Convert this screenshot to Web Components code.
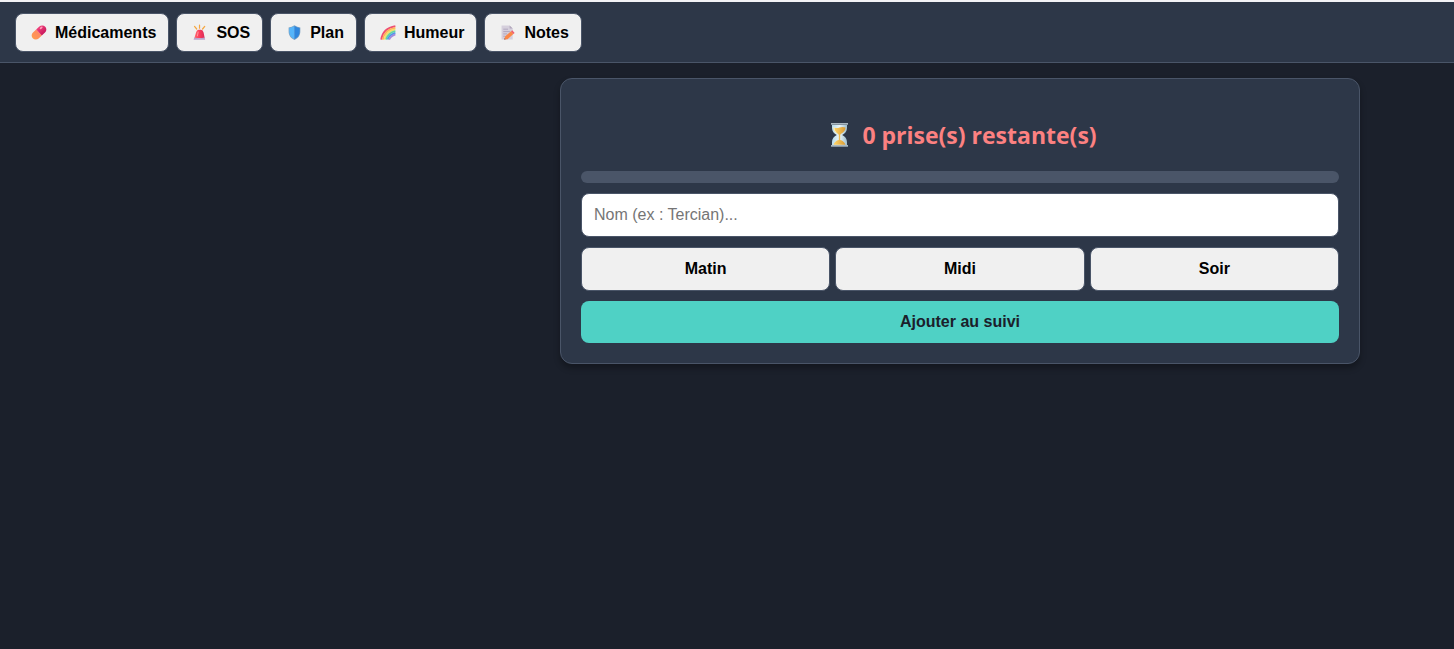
<!DOCTYPE html>
<html lang="fr">
<head>
<meta charset="UTF-8">
<meta name="viewport" content="width=device-width, initial-scale=1.0">
<title>Suivi</title>
<style>
  :root {
    --bg: #1b202b;
    --card: #2d3748;
    --line: #4a5568;
    --accent: #4fd1c5;
    --alert: #fc8181;
    --button: #f0f0f0;
  }
  body {
    margin: 0;
    min-height: 100vh;
    background: var(--bg);
    font-family: "Segoe UI", "Open Sans", "Noto Sans", sans-serif;
  }
  main {
    display: flex;
    justify-content: flex-end;
    padding: 15px 94px;
  }
</style>
</head>
<body>
  <app-nav>
    <nav-button icon="pill">Médicaments</nav-button>
    <nav-button icon="siren">SOS</nav-button>
    <nav-button icon="shield">Plan</nav-button>
    <nav-button icon="rainbow">Humeur</nav-button>
    <nav-button icon="memo">Notes</nav-button>
  </app-nav>
  <main>
    <med-card remaining="0"></med-card>
  </main>

<script>
const ICONS = {
  pill: `
    <defs>
      <linearGradient id="a" x1="0" y1="0" x2="1" y2="0"><stop stop-color="#ff9a4d"/><stop offset="1" stop-color="#ff8a63"/></linearGradient>
      <linearGradient id="b" x1="0" y1="0" x2="0" y2="1"><stop stop-color="#f0417c"/><stop offset="1" stop-color="#c9185c"/></linearGradient>
    </defs>
    <g transform="rotate(-43 11 9)">
      <path d="M11 4.600H6.400a4.400 4.400 0 0 0 0 8.800H11z" fill="url(#a)"/>
      <path d="M11 4.600h4.600a4.400 4.400 0 0 1 0 8.800H11z" fill="url(#b)"/>
      <ellipse cx="16" cy="7" rx="1.800" ry="1" fill="#ff9dbb"/>
    </g>`,
  siren: `
    <defs><linearGradient id="a"><stop stop-color="#ff6a70"/><stop offset=".5" stop-color="#fb3c5c"/><stop offset="1" stop-color="#d92b59"/></linearGradient></defs>
    <path d="M10.500 1.200v3.300M5.200 2.500l2.300 2.800M16 2.500l-2.300 2.800" stroke="#f5a63f" stroke-width="1.300" stroke-linecap="round"/>
    <path d="M6.800 9Q7.500 6.200 9.500 6.200h2.500q2.200 0 2.800 2.800l1.200 6H5z" fill="url(#a)"/>
    <path d="M9 8.500l-.7 4" stroke="#ff9a9e" stroke-width="1" stroke-linecap="round"/>
    <path d="M5 14.200q5.500 1.600 10.800 0l.7 2.600H4.200z" fill="#b9a4cd"/>`,
  shield: `
    <path d="M11.500 1.300Q8.500 3.300 5.300 3.600V8c0 4.300 2.500 7.300 6.200 8.900 3.700-1.600 6.200-4.600 6.200-8.900V3.600Q14.500 3.300 11.500 1.300z" fill="#7fa3c2"/>
    <path d="M11.500 2.200Q9 3.800 6 4.200V8c0 3.900 2 6.600 5.500 8.100z" fill="#55b5fa"/>
    <path d="M11.500 2.200Q14 3.800 17 4.200V8c0 3.900-2 6.600-5.500 8.100z" fill="#2f86dd"/>`,
  rainbow: `
    <g fill="none" stroke-width="1.900">
      <path d="M3.800 16.500C5 8.500 10.500 3.500 18.800 2.200" stroke="#ee4f72"/>
      <path d="M5.500 16.500C6.700 9.700 11.500 5.200 18.800 4" stroke="#ffad58"/>
      <path d="M7.200 16.500C8.400 11 12.500 7 18.800 5.800" stroke="#f4df69"/>
      <path d="M8.900 16.500C10 12.300 13.500 8.800 18.800 7.600" stroke="#62d5a3"/>
      <path d="M10.600 16.500C11.600 13.500 14.500 10.600 18.800 9.400" stroke="#499be9"/>
      <path d="M12.200 16.500C13 14.500 15.500 12.200 18.800 11" stroke="#a389db"/>
    </g>`,
  memo: `
    <path d="M4.200 1.500h8.500l3.300 3.300v11.700H4.200z" fill="#d5cfdc"/>
    <path d="M12.700 1.500v3.300H16z" fill="#b3a8bd"/>
    <path d="M6 5.500h5M6 8h7M6 10.500h4M6 13h2" stroke="#b0a6bd" stroke-width="1"/>
    <path d="M7 16.500l1-3.400 6.200-5.400 2.500 3-6.200 5.400z" fill="#fb8748"/>
    <path d="M14.200 7.700l1.300-1.100 2.500 3-1.300 1.100z" fill="#f05a6a"/>
    <path d="M7 16.500l.4-1.400 1.100 1.100z" fill="#5b3f48"/>`,
  hourglass: `
    <defs>
      <linearGradient id="g"><stop stop-color="#b9dbea"/><stop offset=".5" stop-color="#e9f5f8"/><stop offset="1" stop-color="#9ebdcd"/></linearGradient>
      <linearGradient id="s"><stop stop-color="#ffd66b"/><stop offset="1" stop-color="#d99a33"/></linearGradient>
    </defs>
    <path d="M9 2.500h15V6c0 3.500-2 5.300-4.800 7 2.800 1.700 4.800 3.500 4.800 7v3.500H9V20c0-3.500 2-5.300 4.800-7C11 11.300 9 9.500 9 6z" fill="url(#g)"/>
    <path d="M10.500 5.500q3 1.200 6 0t6 0c0 3.200-2 4.800-4.700 6.500l-.6 1v5c2.600.5 4.400 2.300 5.300 4.700h-12c.9-2.400 2.700-4.200 5.300-4.700v-5l-.6-1c-2.700-1.700-4.700-3.300-4.700-6.500z" fill="url(#s)"/>
    <path d="M11 5c0 3 1 5 2.700 6.200" fill="none" stroke="#fff2c2" stroke-width="1"/>
    <path d="M8 1h17v2H8zM8 23h17v2H8z" fill="#84939f"/>
    <path d="M8 1h17v.8H8zM8 23h17v.8H8z" fill="#b5c2ca"/>`
};

class AppNav extends HTMLElement {
  connectedCallback() {
    this.attachShadow({ mode: 'open' });
    this.shadowRoot.innerHTML = `
      <style>
        :host {
          display: block;
        }
        nav {
          display: flex;
          flex-wrap: wrap;
          gap: 7px;
          padding: 11px 15px 10px;
          background: var(--card);
          border-top: 2px solid #f3f3f6;
          border-bottom: 1px solid var(--line);
        }
      </style>
      <nav><slot></slot></nav>
    `;
  }
}

class NavButton extends HTMLElement {
  connectedCallback() {
    this.attachShadow({ mode: 'open' });
    this.shadowRoot.innerHTML = `
      <style>
        :host {
          display: block;
        }
        button {
          display: flex;
          align-items: center;
          gap: 5px;
          padding: 10px 12px;
          border: 1px solid var(--line);
          border-radius: 8px;
          background: var(--button);
          color: #000;
          font: bold 16px/17px Arial, "Liberation Sans", sans-serif;
          cursor: pointer;
        }
        svg {
          width: 22px;
          height: 17px;
        }
      </style>
      <button type="button">
        <svg viewBox="0 0 22 18" fill="none" aria-hidden="true">${ICONS[this.getAttribute('icon')]}</svg>
        <span><slot></slot></span>
      </button>
    `;
  }
}

class MedCard extends HTMLElement {
  connectedCallback() {
    const remaining = this.getAttribute('remaining');
    this.attachShadow({ mode: 'open' });
    this.shadowRoot.innerHTML = `
      <style>
        * {
          box-sizing: border-box;
        }
        :host {
          display: block;
          box-sizing: border-box;
          flex: 0 1 800px;
          min-width: 0;
          padding: 20px;
          background: var(--card);
          border: 1px solid var(--line);
          border-radius: 12px;
          box-shadow: 0 4px 6px rgba(0, 0, 0, 0.3);
        }
        h2 {
          display: flex;
          align-items: center;
          justify-content: center;
          gap: 6px;
          margin: 20px 0;
          color: var(--alert);
          font-size: 23px;
          line-height: 32px;
        }
        h2 svg {
          width: 33px;
          height: 26px;
        }
        form {
          display: flex;
          flex-direction: column;
          gap: 10px;
        }
        progress {
          display: block;
          appearance: none;
          width: 100%;
          height: 12px;
          border: 0;
          border-radius: 6px;
          overflow: hidden;
          background: var(--line);
        }
        progress::-webkit-progress-bar {
          background: var(--line);
        }
        progress::-webkit-progress-value {
          background: var(--accent);
        }
        input, button {
          width: 100%;
          padding: 12px;
          border: 1px solid var(--line);
          border-radius: 8px;
          font: 16px/18px Arial, "Liberation Sans", sans-serif;
        }
        input {
          height: 44px;
          background: #fff;
        }
        input::placeholder {
          color: #757575;
        }
        button {
          background: var(--button);
          color: #000;
          font-weight: bold;
          cursor: pointer;
        }
        .moments {
          display: flex;
          gap: 5px;
        }
        .add {
          border: 0;
          background: var(--accent);
          color: var(--bg);
        }
      </style>
      <h2>
        <svg viewBox="0 0 33 26" aria-hidden="true">${ICONS.hourglass}</svg>
        <span>${remaining} prise(s) restante(s)</span>
      </h2>
      <form>
        <progress value="0" max="100" aria-label="Progression"></progress>
        <input type="text" placeholder="Nom (ex : Tercian)..." aria-label="Nom du médicament">
        <div class="moments">
          <button type="button">Matin</button>
          <button type="button">Midi</button>
          <button type="button">Soir</button>
        </div>
        <button type="button" class="add">Ajouter au suivi</button>
      </form>
    `;
  }
}

customElements.define('app-nav', AppNav);
customElements.define('nav-button', NavButton);
customElements.define('med-card', MedCard);
</script>
</body>
</html>
